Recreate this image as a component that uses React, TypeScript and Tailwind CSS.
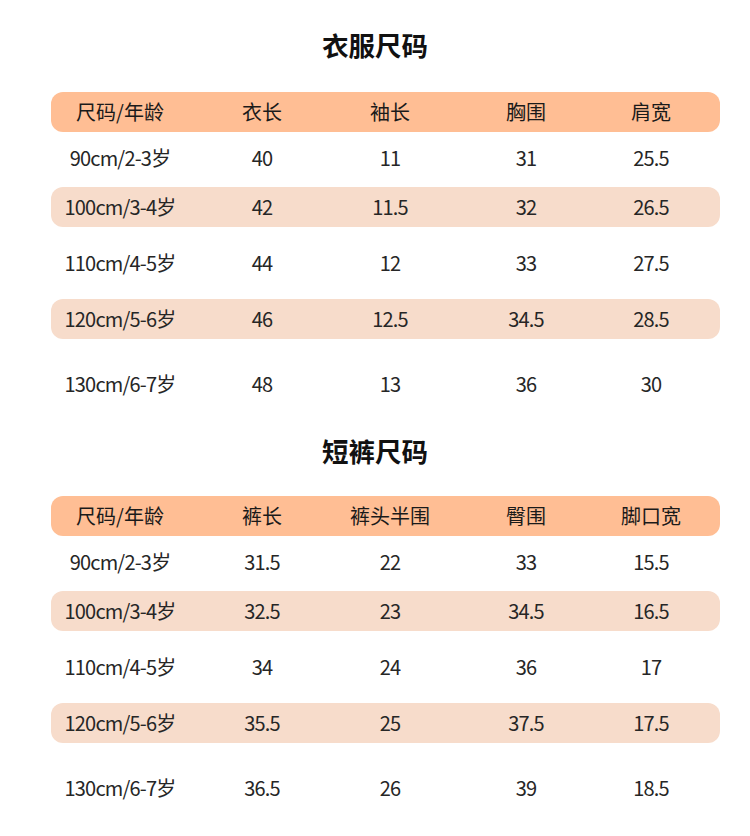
import React from "react";

const colW = ["w-[138px]", "w-[146px]", "w-[110px]", "w-[162px]", "w-[88px]"];

function Cells({ cells, head }: { cells: string[]; head?: boolean }) {
  return (
    <>
      {cells.map((c, i) => (
        <div
          key={i}
          className={`${colW[i]} shrink-0 text-center whitespace-nowrap ${
            head ? "text-[20px] text-[#1a1a1a]" : "text-[20px] tracking-[-0.8px] text-[#262626]"
          }`}
        >
          {c}
        </div>
      ))}
    </>
  );
}

function Table({ head, rows }: { head: string[]; rows: string[][] }) {
  const heights = [
    "h-[55px] pb-[4px]",
    "h-[40px] bg-[#F7DCCB] rounded-[12px]",
    "h-[72px]",
    "h-[40px] bg-[#F7DCCB] rounded-[12px]",
    "h-[90px]",
  ];
  return (
    <div className="mx-[51px] w-[669px]">
      <div className="flex h-[40px] items-center rounded-[12px] bg-[#FFBE94] leading-none">
        <Cells cells={head} head />
      </div>
      {rows.map((r, i) => (
        <div key={i} className={`flex items-center leading-none ${heights[i]}`}>
          <Cells cells={r} />
        </div>
      ))}
    </div>
  );
}

export default function App() {
  return (
    <div
      className="w-[750px] h-[836px] bg-white overflow-hidden"
      style={{ fontFamily: '"Noto Sans CJK SC", "Noto Sans", sans-serif' }}
    >
      <div className="mt-[27px] h-[36px] text-center text-[26.5px] font-bold leading-[36px] text-[#111]">
        衣服尺码
      </div>
      <div className="mt-[29px]">
        <Table
          head={["尺码/年龄", "衣长", "袖长", "胸围", "肩宽"]}
          rows={[
            ["90cm/2-3岁", "40", "11", "31", "25.5"],
            ["100cm/3-4岁", "42", "11.5", "32", "26.5"],
            ["110cm/4-5岁", "44", "12", "33", "27.5"],
            ["120cm/5-6岁", "46", "12.5", "34.5", "28.5"],
            ["130cm/6-7岁", "48", "13", "36", "30"],
          ]}
        />
      </div>
      <div className="mt-[4px] h-[36px] text-center text-[26.5px] font-bold leading-[36px] text-[#111]">
        短裤尺码
      </div>
      <div className="mt-[27px]">
        <Table
          head={["尺码/年龄", "裤长", "裤头半围", "臀围", "脚口宽"]}
          rows={[
            ["90cm/2-3岁", "31.5", "22", "33", "15.5"],
            ["100cm/3-4岁", "32.5", "23", "34.5", "16.5"],
            ["110cm/4-5岁", "34", "24", "36", "17"],
            ["120cm/5-6岁", "35.5", "25", "37.5", "17.5"],
            ["130cm/6-7岁", "36.5", "26", "39", "18.5"],
          ]}
        />
      </div>
    </div>
  );
}
